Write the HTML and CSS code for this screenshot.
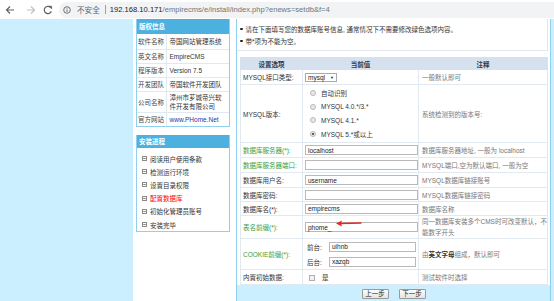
FILE: index.html
```html
<!DOCTYPE html>
<html>
<head>
<meta charset="utf-8">
<title>EmpireCMS 安装</title>
<link rel="stylesheet" href="styles.css">
</head>
<body>
<div class="chrome">
  <span class="nav nav-back"><svg width="10" height="10" viewBox="0 0 10 10"><path d="M9 5H1.5M5 1.5L1.5 5L5 8.5" fill="none" stroke="#5f6368" stroke-width="1.2"/></svg></span>
  <span class="nav nav-fwd"><svg width="10" height="10" viewBox="0 0 10 10"><path d="M1 5H8.5M5 1.5L8.5 5L5 8.5" fill="none" stroke="#bdc1c6" stroke-width="1.2"/></svg></span>
  <span class="nav nav-reload"><svg width="10" height="10" viewBox="0 0 10 10"><path d="M8.3 6.2A3.6 3.6 0 1 1 7.6 2.6" fill="none" stroke="#5f6368" stroke-width="1.2"/><path d="M6 1.2H8.6V3.8Z" fill="#5f6368" stroke="#5f6368" stroke-width="0.8"/></svg></span>
  <div class="omni">
    <svg class="info" width="8" height="8" viewBox="0 0 8 8"><circle cx="4" cy="4" r="3.3" fill="none" stroke="#5f6368" stroke-width="0.9"/><path d="M4 3.5V6" stroke="#5f6368" stroke-width="0.9"/><circle cx="4" cy="2.3" r="0.5" fill="#5f6368"/></svg>
    <span class="insecure">不安全</span>
    <span class="sep"></span>
    <span class="host">192.168.10.171</span><span class="path">/empirecms/e/install/index.php?enews=setdb&amp;f=4</span>
  </div>
</div>
<div class="page">
  <div class="wrap">
    <aside class="side">
      <div class="panel">
        <div class="ph">版权信息</div>
        <table class="info-tbl">
          <tr class="r1"><td class="l">软件名称</td><td class="v">帝国网站管理系统</td></tr>
          <tr><td class="l">英文名称</td><td class="v">EmpireCMS</td></tr>
          <tr><td class="l">程序版本</td><td class="v">Version 7.5</td></tr>
          <tr><td class="l">开发团队</td><td class="v">帝国软件开发团队</td></tr>
          <tr class="r2"><td class="l">公司名称</td><td class="v two">漳州市芗城帝兴软<br>件开发有限公司</td></tr>
          <tr><td class="l">官方网站</td><td class="v"><span class="link">www.PHome.Net</span></td></tr>
        </table>
      </div>
      <div class="panel steps">
        <div class="ph ph2">安装进程</div>
        <ul>
          <li><svg class="ico" width="5" height="5" viewBox="0 0 5 5"><rect x="0.5" y="0.5" width="4" height="4" fill="#fff" stroke="#8a8a8a"/><path d="M1.2 2.5H3.8" stroke="#8a8a8a"/></svg>阅读用户使用条款</li>
          <li><svg class="ico" width="5" height="5" viewBox="0 0 5 5"><rect x="0.5" y="0.5" width="4" height="4" fill="#fff" stroke="#8a8a8a"/><path d="M1.2 2.5H3.8" stroke="#8a8a8a"/></svg>检测运行环境</li>
          <li><svg class="ico" width="5" height="5" viewBox="0 0 5 5"><rect x="0.5" y="0.5" width="4" height="4" fill="#fff" stroke="#8a8a8a"/><path d="M1.2 2.5H3.8" stroke="#8a8a8a"/></svg>设置目录权限</li>
          <li class="cur"><svg class="ico" width="5" height="5" viewBox="0 0 5 5"><rect x="0.5" y="0.5" width="4" height="4" fill="#fff" stroke="#8a8a8a"/><path d="M1.2 2.5H3.8" stroke="#8a8a8a"/></svg>配置数据库</li>
          <li><svg class="ico" width="5" height="5" viewBox="0 0 5 5"><rect x="0.5" y="0.5" width="4" height="4" fill="#fff" stroke="#8a8a8a"/><path d="M1.2 2.5H3.8" stroke="#8a8a8a"/></svg>初始化管理员账号</li>
          <li><svg class="ico" width="5" height="5" viewBox="0 0 5 5"><rect x="0.5" y="0.5" width="4" height="4" fill="#fff" stroke="#8a8a8a"/><path d="M1.2 2.5H3.8" stroke="#8a8a8a"/></svg>安装完毕</li>
        </ul>
      </div>
    </aside>
    <main class="main">
      <div class="notes">
        <ul>
          <li>请在下面填写您的数据库账号信息, 通常情况下不需要修改绿色选项内容。</li>
          <li>带*项为不能为空。</li>
        </ul>
      </div>
      <table class="form">
        <colgroup><col class="c1"><col class="c2"><col class="c3"></colgroup>
        <tr class="hd"><th>设置选项</th><th>当前值</th><th>注释</th></tr>
        <tr class="h15"><td class="k">MYSQL接口类型:</td><td class="v"><span class="sel">mysql<span class="caret">▼</span></span></td><td class="c">一般默认即可</td></tr>
        <tr class="h58"><td class="k">MYSQL版本:</td><td class="v">
          <div class="opt"><span class="radio"></span>自动识别</div>
          <div class="opt"><span class="radio"></span>MYSQL 4.0.*/3.*</div>
          <div class="opt"><span class="radio"></span>MYSQL 4.1.*</div>
          <div class="opt"><span class="radio on"></span>MYSQL 5.*或以上</div>
        </td><td class="c">系统检测到的版本号:</td></tr>
        <tr class="h15"><td class="k green">数据库服务器(*):</td><td class="v"><span class="inp">localhost</span></td><td class="c">数据库服务器地址, 一般为 localhost</td></tr>
        <tr class="h15"><td class="k green">数据库服务器端口:</td><td class="v"><span class="inp"></span></td><td class="c">MYSQL端口,空为默认端口, 一般为空</td></tr>
        <tr class="h15"><td class="k">数据库用户名:</td><td class="v"><span class="inp">username</span></td><td class="c">MYSQL数据库链接账号</td></tr>
        <tr class="h14"><td class="k">数据库密码:</td><td class="v"><span class="inp"></span></td><td class="c">MYSQL数据库链接密码</td></tr>
        <tr class="h14"><td class="k">数据库名(*):</td><td class="v"><span class="inp">empirecms</span></td><td class="c">数据库名称</td></tr>
        <tr class="h22"><td class="k green">表名前缀(*):</td><td class="v"><span class="inp">phome_</span></td><td class="c two">同一数据库安装多个CMS时可改变默认，不<br>能数字开头</td></tr>
        <tr class="h31"><td class="k green">COOKIE前缀(*):</td><td class="v">
          <div class="ck"><span class="ckl">前台:</span><span class="inp small">uihnb</span></div>
          <div class="ck"><span class="ckl">后台:</span><span class="inp small">xazqb</span></div>
        </td><td class="c">由<b>英文字母</b>组成，默认即可</td></tr>
        <tr class="h15"><td class="k">内置初始数据:</td><td class="v"><span class="chk"></span>是</td><td class="c">测试软件时选择</td></tr>
      </table>
      <div class="btns"><button class="btn">上一步</button><button class="btn">下一步</button></div>
      <svg class="arrow" width="26" height="7" viewBox="0 0 26 7"><path d="M4 3.5L25 3" stroke="#e8261f" stroke-width="1.3" stroke-linecap="round"/><path d="M0 3.5L6 0.6L5 3.5L6 6.4Z" fill="#e8261f"/></svg>
    </main>
  </div>
</div>
</body>
</html>
```

FILE: styles.css
```css
* { box-sizing: border-box; }
html, body { margin: 0; padding: 0; }
body {
  width: 554px;
  height: 301px;
  overflow: hidden;
  font-family: "Liberation Sans", "Noto Sans CJK SC", sans-serif;
  font-size: 6.5px;
  color: #333;
  background: #cbeffe;
}

/* browser chrome */
.chrome {
  height: 19px;
  background: #fff;
  display: flex;
  align-items: center;
  padding-left: 5px;
}
.nav { width: 10px; height: 10px; display: flex; }
.nav-back { margin-right: 11px; }
.nav-fwd { margin-right: 7px; }
.nav-reload { margin-right: 6px; }
.omni {
  flex: 1;
  height: 16px;
  background: #f1f3f4;
  border-radius: 8px 0 0 8px;
  display: flex;
  align-items: center;
  padding-left: 4px;
  font-size: 7.6px;
  white-space: nowrap;
}
.info { margin-right: 6px; }
.insecure { color: #5f6368; }
.sep { width: 1px; height: 9px; background: #9aa0a6; margin: 0 4px 0 5px; }
.host { color: #202124; }
.path { color: #70757a; }

/* page */
.page { display: flex; height: 282px; }
.wrap {
  margin-left: 133px;
  width: 418px;
  background: #fff;
  display: flex;
}

/* sidebar */
.side { width: 103px; padding-left: 3px; }
.panel { width: 94px; border: 1px solid #8fd0ee; border-top: 0; }
.ph {
  height: 15px;
  line-height: 15px;
  background: #4db1df;
  color: #fff;
  font-weight: bold;
  padding-left: 2px;
}
.info-tbl { border-collapse: collapse; width: 100%; }
.info-tbl td { border-bottom: 1px solid #e1e9f0; height: 14px; padding: 0; white-space: nowrap; }
.info-tbl tr:last-child td { border-bottom: 0; }
.info-tbl .r1 td { height: 15px; }
.info-tbl .r2 td { height: 21px; }
.info-tbl td.l { width: 29px; color: #444; padding-left: 1px; border-right: 1px solid #e1e9f0; }
.info-tbl td.v { padding-left: 3px; color: #333; }
.info-tbl td.two { line-height: 9px; }
.link { color: #1a3a9a; }

.steps { margin-top: 8px; border-top: 0; }
.ph2 { height: 13px; line-height: 13px; }
.steps ul { list-style: none; margin: 0; padding: 4px 0 0 5px; height: 83px; }
.steps li { display: flex; align-items: center; height: 13.2px; color: #333; }
.steps li.cur { color: #f00; }
.ico { margin-right: 3px; flex: none; }

/* main */
.main {
  width: 315px;
  border-left: 1px solid #8fd0ee;
  border-right: 1px solid #8fd0ee;
  position: relative;
  display: flex;
  flex-direction: column;
}
.notes {
  height: 32px;
  margin-right: 2px;
  border-right: 1px solid #e3e8ee;
  border-bottom: 1px solid #e3e8ee;
}
.notes ul { list-style: none; margin: 0; padding: 4px 0 0 3px; }
.notes li { display: flex; align-items: center; height: 12px; color: #333; }
.notes li::before {
  content: "";
  width: 2.5px;
  height: 2.5px;
  border-radius: 50%;
  background: #222;
  margin-right: 3px;
}

.form {
  border-collapse: collapse;
  table-layout: fixed;
  width: 307px;
  margin: 6px 0 0 3px;
}
.form col.c1 { width: 62px; }
.form col.c2 { width: 116px; }
.form col.c3 { width: 129px; }
.form th, .form td { border: 1px solid #e3e9f0; padding: 0; white-space: nowrap; }
.form th { background: #d5e1ef; height: 12px; font-weight: bold; color: #2d3a4a; border-color: #d5e1ef; }
.form tr.h14 td { height: 14px; }
.form tr.h15 td { height: 15px; }
.form tr.h22 td { height: 22px; }
.form tr.h31 td { height: 31px; }
.form tr.h58 td { height: 58px; }
.form td.k { padding-left: 2px; color: #333; }
.form td.k.green { color: #3c9d3c; }
.form td.v { padding-left: 2px; }
.form td.c { padding-left: 3px; color: #777; }
.form td.c b { color: #333; }
.form td.two { line-height: 11px; }

.sel {
  display: inline-flex;
  align-items: center;
  justify-content: space-between;
  width: 32px;
  height: 9px;
  border: 1px solid #aaa;
  padding: 0 2px;
  color: #222;
  background: #fff;
}
.caret { font-size: 4px; color: #222; }
.opt { display: flex; align-items: center; height: 13.7px; color: #333; }
.radio {
  width: 6px;
  height: 6px;
  border-radius: 50%;
  border: 1px solid #b8b8b8;
  background: #e9e9e9;
  margin: 0 5px 0 5px;
  position: relative;
}
.radio.on::after {
  content: "";
  position: absolute;
  left: 1px;
  top: 1px;
  width: 2px;
  height: 2px;
  border-radius: 50%;
  background: #333;
}
.inp {
  display: flex;
  align-items: center;
  width: 113px;
  height: 10px;
  border: 1px solid #b9b9b9;
  padding-left: 2px;
  color: #222;
  background: #fff;
}
.inp.small { width: 87px; }
.ck { display: flex; align-items: center; height: 15px; padding-left: 2px; }
.ckl { width: 22px; color: #333; }
.chk {
  display: inline-block;
  width: 6px;
  height: 6px;
  border: 1px solid #b0b0b0;
  background: #f2f2f2;
  margin: 0 7px 0 4px;
  vertical-align: middle;
}

.btns {
  flex: 1;
  background: #cbeffe;
  display: flex;
  justify-content: center;
  align-items: flex-start;
  gap: 10px;
  padding-top: 4px;
}
.btn {
  width: 27px;
  height: 10px;
  padding: 0;
  border: 1px solid #9a9a9a;
  border-radius: 1px;
  background: linear-gradient(#fdfdfd, #e4e4e4);
  font-family: "Liberation Sans", "Noto Sans CJK SC", sans-serif;
  font-size: 6.5px;
  line-height: 8px;
  color: #222;
}
.arrow { position: absolute; left: 99px; top: 201px; }
```
